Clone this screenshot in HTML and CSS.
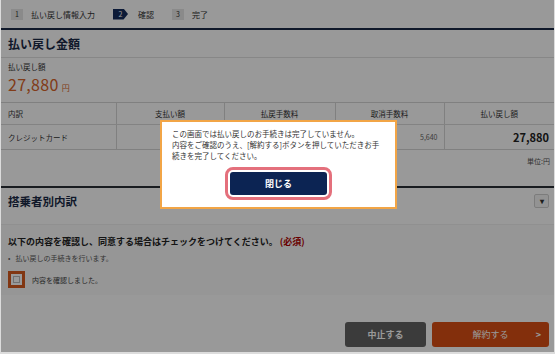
FILE: index.html
```html
<!DOCTYPE html>
<html lang="ja">
<head>
    <meta charset="UTF-8">
    <title>払い戻し 確認</title>
    <link rel="stylesheet" href="styles.css">
</head>
<body>

    <div class="page">

        <!-- step indicator -->
        <div class="steps">
            <div class="step"><span class="step-no">1</span>払い戻し情報入力</div>
            <div class="step active"><span class="step-no">2</span>確認</div>
            <div class="step"><span class="step-no">3</span>完了</div>
        </div>

        <h2 class="section-title">払い戻し金額</h2>

        <div class="amount">
            <div class="amount-label">払い戻し額</div>
            <div class="amount-value">27,880<span class="yen">円</span></div>
        </div>

        <table class="breakdown">
            <tr>
                <th class="left">内訳</th>
                <th>支払い額</th>
                <th>払戻手数料</th>
                <th>取消手数料</th>
                <th>払い戻し額</th>
            </tr>
            <tr>
                <td class="left">クレジットカード</td>
                <td></td>
                <td></td>
                <td class="num">5,640</td>
                <td class="num total">27,880</td>
            </tr>
        </table>
        <div class="unit">単位:円</div>

        <div class="section-title passenger">
            <h2>搭乗者別内訳</h2>
            <span class="toggle">▾</span>
        </div>

        <div class="agree">
            <p class="agree-title">以下の内容を確認し、同意する場合はチェックをつけてください。<span class="req">(必須)</span></p>
            <ul class="agree-list">
                <li>払い戻しの手続きを行います。</li>
            </ul>
            <label class="check">
                <span class="box"></span>
                内容を確認しました。
            </label>
        </div>

        <div class="actions">
            <button class="btn btn-cancel">中止する</button>
            <button class="btn btn-submit">解約する<span class="chev">&gt;</span></button>
        </div>

        <!-- modal -->
        <div class="overlay"></div>
        <div class="modal">
            <p class="modal-text">この画面では払い戻しのお手続きは完了していません。<br>内容をご確認のうえ、[解約する]ボタンを押していただきお手<br>続きを完了してください。</p>
            <div class="modal-foot">
                <button class="btn-close">閉じる</button>
            </div>
        </div>
    </div>

</body>
</html>
```

FILE: styles.css
```css
* { margin: 0; padding: 0; box-sizing: border-box; }

body {
    width: 555px;
    height: 354px;
    overflow: hidden;
    background: #dcdcdc;
    font-family: "Noto Sans CJK JP", "Noto Sans", sans-serif;
    color: #333;
}

.page {
    position: relative;
    width: 553px;
    height: 352px;
    margin-left: 1px;
    background: #fff;
    overflow: hidden;
}

/* --- STEPS --- */
.steps {
    height: 30px;
    display: flex;
    align-items: center;
    padding-left: 10px;
    border-bottom: 2px solid #1b2b47;
    font-size: 8px;
    color: #333;
}

.step { display: flex; align-items: center; margin-right: 18px; }

.step-no {
    width: 12px;
    height: 11px;
    background: #e6e6e6;
    display: inline-flex;
    justify-content: center;
    align-items: center;
    font-size: 7px;
    margin-right: 8px;
}

.step.active .step-no {
    width: 15px;
    background: #142c5c;
    color: #fff;
    clip-path: polygon(0 0, 70% 0, 100% 50%, 70% 100%, 0 100%);
    margin-right: 10px;
}

/* --- HEADINGS --- */
.section-title {
    font-size: 12px;
    font-weight: bold;
    color: #1b2b47;
    height: 28px;
    line-height: 28px;
    padding-left: 7px;
    border-bottom: 1px solid #e2e2e2;
}

/* --- AMOUNT --- */
.amount { padding: 4px 7px 0; height: 44px; }
.amount-label { font-size: 7.5px; line-height: 10px; }
.amount-value {
    font-size: 16px;
    line-height: 24px;
    color: #d8642a;
    letter-spacing: 0.3px;
}
.yen { font-size: 8px; margin-left: 3px; }

/* --- TABLE --- */
.breakdown {
    width: 100%;
    border-collapse: collapse;
    font-size: 7.5px;
}

.breakdown th, .breakdown td {
    border: 1px solid #d6d6d6;
    text-align: center;
    font-weight: normal;
}

.breakdown tr:first-child th { height: 22px; border-bottom: 1px solid #dadada; }
.breakdown td { height: 25px; }
.breakdown th:first-child, .breakdown td:first-child { border-left: none; width: 115px; }
.breakdown th:last-child, .breakdown td:last-child { border-right: none; width: 110px; }
.breakdown th:nth-child(2) { width: 108px; }
.breakdown th:nth-child(3) { width: 111px; }
.breakdown .left { text-align: left; padding-left: 7px; }
.breakdown .num { text-align: right; padding-right: 6px; color: #666; font-size: 7px; }
.breakdown .total { font-size: 11px; font-weight: bold; color: #222; padding-right: 5px; }

.unit {
    text-align: right;
    font-size: 7px;
    padding: 6px 4px 0 0;
    height: 36px;
    color: #555;
}

/* --- PASSENGER SECTION --- */
.passenger {
    display: flex;
    justify-content: space-between;
    align-items: center;
    border-top: 2px solid #2b2f36;
    height: 28px;
    margin-bottom: 10px;
    border-bottom: none;
    padding-right: 5px;
}
.passenger h2 { font-size: 11.5px; }

.toggle {
    width: 15px;
    height: 14px;
    border: 1px solid #cfcfcf;
    border-radius: 2px;
    font-size: 8px;
    line-height: 12px;
    text-align: center;
    color: #333;
    background: #f6f6f6;
}

/* --- AGREEMENT --- */
.agree {
    background: #fafafa;
    padding: 11px 7px 0;
    height: 71px;
    border-top: 1px solid #f0f0f0;
}

.agree-title { font-size: 9px; font-weight: bold; color: #222; line-height: 12px; }
.req { color: #b00000; margin-left: 2px; }

.agree-list { list-style: none; font-size: 7px; color: #555; margin: 5px 0 8px; }
.agree-list li::before { content: "•"; margin-right: 5px; color: #666; }

.check { display: flex; align-items: center; font-size: 7px; color: #444; }
.box {
    width: 17px;
    height: 17px;
    border: 3px solid #d85a1e;
    background: #fff;
    margin-right: 7px;
    position: relative;
}
.box::after {
    content: "";
    position: absolute;
    inset: 2px;
    border: 1px solid #bbb;
}

/* --- ACTIONS --- */
.actions {
    display: flex;
    justify-content: flex-end;
    gap: 6px;
    padding: 27px 5px 0 0;
}

.btn {
    height: 25px;
    border: none;
    border-radius: 3px;
    color: #fff;
    font-family: inherit;
    font-size: 9px;
    font-weight: bold;
}

.btn-cancel { width: 81px; background: #636363; }
.btn-submit {
    width: 117px;
    background: #db4f14;
    position: relative;
    font-weight: normal;
}
.chev { position: absolute; right: 8px; font-weight: bold; }

/* --- MODAL --- */
.overlay {
    position: absolute;
    inset: 0;
    background: rgba(0, 0, 0, 0.4);
}

.modal {
    position: absolute;
    left: 159px;
    top: 120px;
    width: 237px;
    height: 89px;
    background: #fff;
    border: 2px solid #f2a546;
    padding: 6px 0 0 10px;
}

.modal-text {
    font-size: 7.5px;
    line-height: 11px;
    color: #333;
    white-space: nowrap;
}

.modal-foot { display: flex; justify-content: center; padding: 11px 10px 0 0; }

.btn-close {
    width: 97px;
    height: 23px;
    background: #0c2453;
    color: #fff;
    border: none;
    border-radius: 3px;
    font-family: inherit;
    font-size: 9px;
    font-weight: bold;
    outline: 3px solid #e4707c;
    outline-offset: 2px;
}
```
